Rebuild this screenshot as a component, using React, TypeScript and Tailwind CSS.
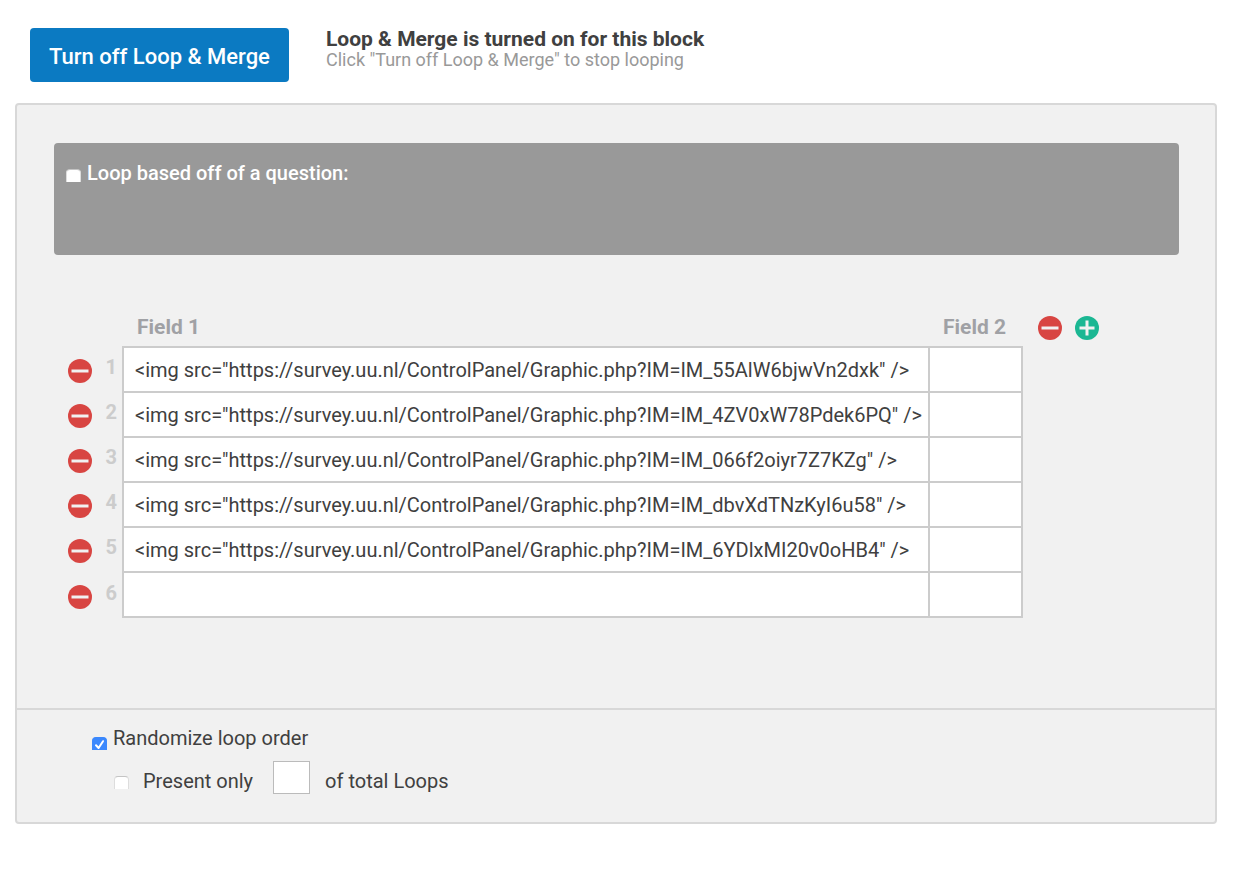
import { useState } from 'react';

interface LoopRow {
  field1: string;
  field2: string;
}

const IMAGE_URL = 'https://survey.uu.nl/ControlPanel/Graphic.php?IM=';

const imageTag = (id: string) => `<img src="${IMAGE_URL}${id}" />`;

const INITIAL_ROWS: LoopRow[] = [
  { field1: imageTag('IM_55AlW6bjwVn2dxk'), field2: '' },
  { field1: imageTag('IM_4ZV0xW78Pdek6PQ'), field2: '' },
  { field1: imageTag('IM_066f2oiyr7Z7KZg'), field2: '' },
  { field1: imageTag('IM_dbvXdTNzKyI6u58'), field2: '' },
  { field1: imageTag('IM_6YDlxMI20v0oHB4'), field2: '' },
  { field1: '', field2: '' },
];

export default function App() {
  const [rows, setRows] = useState(INITIAL_ROWS);
  const [fromQuestion, setFromQuestion] = useState(false);
  const [randomize, setRandomize] = useState(true);
  const [presentOnly, setPresentOnly] = useState(false);
  const [total, setTotal] = useState('');

  const update = (index: number, key: keyof LoopRow, value: string) =>
    setRows(rows.map((row, i) => (i === index ? { ...row, [key]: value } : row)));

  const remove = (index: number) => setRows(rows.filter((_, i) => i !== index));

  return (
    <div className="min-h-screen bg-white pt-7 pr-[23px] pb-11 pl-[15px] font-['Roboto',sans-serif] text-[20px] leading-6 text-[#404040]">
      <header className="mb-[21px] flex items-start pl-[15px]">
        <button
          type="button"
          className="h-[54px] w-[259px] rounded bg-[#0b7ac2] pt-1 text-[22px] font-medium text-white"
        >
          Turn off Loop &amp; Merge
        </button>
        <div className="ml-[37px]">
          <h1 className="text-[21px] leading-[22px] font-bold">
            Loop &amp; Merge is turned on for this block
          </h1>
          <p className="text-[18px] leading-5 text-[#999999]">
            Click "Turn off Loop &amp; Merge" to stop looping
          </p>
        </div>
      </header>

      <main className="rounded border-2 border-[#d8d8d8] bg-[#f1f1f1]">
        <section className="pt-[38px] pr-9 pb-[90px] pl-[37px]">
          <div className="h-28 rounded bg-[#999999] pt-[18px] pl-3">
            <label className="flex w-fit items-center gap-1.5 font-medium text-white">
              <Checkbox checked={fromQuestion} onChange={setFromQuestion} />
              Loop based off of a question:
            </label>
          </div>

          <table className="mt-[55px] w-full table-fixed border-separate border-spacing-0">
            <colgroup>
              <col className="w-[50px]" />
              <col className="w-[18px]" />
              <col className="w-[806px]" />
              <col className="w-[95px]" />
              <col />
            </colgroup>
            <thead>
              <tr className="h-9 text-left text-[21px] text-[#a0a1a5]">
                <td />
                <td />
                <th scope="col" className="pb-0.5 pl-[15px] font-bold">
                  Field 1
                </th>
                <th scope="col" className="pb-0.5 pl-[15px] font-bold">
                  Field 2
                </th>
                <td>
                  <div className="flex gap-[13px] pl-[15px]">
                    <RoundButton label="Remove field" />
                    <RoundButton label="Add field" plus />
                  </div>
                </td>
              </tr>
            </thead>
            <tbody>
              {rows.map((row, i) => (
                <tr key={i} className="group h-[45px]">
                  <td className="pt-1 pl-3.5">
                    <RoundButton label={`Remove row ${i + 1}`} onClick={() => remove(i)} />
                  </td>
                  <th scope="row" className="pr-[5px] pb-1 text-right font-bold text-[#cccccc]">
                    {i + 1}
                  </th>
                  <td className="border-t-2 border-l-2 border-[#cccccc] bg-white group-last:border-b-2">
                    <CellInput
                      label={`Field 1, row ${i + 1}`}
                      value={row.field1}
                      onChange={(value) => update(i, 'field1', value)}
                    />
                  </td>
                  <td className="border-x-2 border-t-2 border-[#cccccc] bg-white group-last:border-b-2">
                    <CellInput
                      label={`Field 2, row ${i + 1}`}
                      value={row.field2}
                      onChange={(value) => update(i, 'field2', value)}
                    />
                  </td>
                </tr>
              ))}
            </tbody>
          </table>
        </section>

        <section className="border-t-2 border-[#d8d8d8] pt-[15px] pb-7 pl-[75px]">
          <label className="flex w-fit items-center gap-1.5">
            <span className="pt-2">
              <Checkbox checked={randomize} onChange={setRandomize} />
            </span>
            Randomize loop order
          </label>
          <div className="mt-[11px] flex items-center pl-[22px]">
            <label className="flex items-center gap-3.5 pt-1.5">
              <Checkbox checked={presentOnly} onChange={setPresentOnly} />
              Present only
            </label>
            <input
              type="text"
              id="total-loops"
              value={total}
              onChange={(e) => setTotal(e.target.value)}
              className="mr-[15px] ml-5 h-[33px] w-[37px] border border-[#bbbbbb] bg-white px-1"
            />
            <label htmlFor="total-loops" className="pt-1.5">
              of total Loops
            </label>
          </div>
        </section>
      </main>
    </div>
  );
}

function Checkbox({
  checked,
  onChange,
}: {
  checked: boolean;
  onChange: (checked: boolean) => void;
}) {
  return (
    <span className="relative mt-1 flex">
      <input
        type="checkbox"
        checked={checked}
        onChange={(e) => onChange(e.target.checked)}
        className="peer h-[13px] w-[15px] appearance-none rounded-t-sm border-x border-t border-x-[#dddddd] border-t-[#c4c4c4] bg-white checked:border-[#3b88fd] checked:bg-[#3b88fd]"
      />
      <svg
        viewBox="0 0 15 13"
        className="pointer-events-none absolute inset-0 hidden peer-checked:block"
        fill="none"
        stroke="white"
        strokeWidth="2"
        strokeLinecap="round"
        strokeLinejoin="round"
      >
        <path d="M4 8.2 6.6 11 11 4.2" />
      </svg>
    </span>
  );
}

function RoundButton({
  label,
  plus = false,
  onClick,
}: {
  label: string;
  plus?: boolean;
  onClick?: () => void;
}) {
  return (
    <button type="button" aria-label={label} onClick={onClick} className="block size-6">
      <svg viewBox="0 0 24 24" className="size-full">
        <circle cx="12" cy="12" r="12" fill={plus ? '#1bb793' : '#d84542'} />
        {plus ? (
          <path d="M4.5 12h15M12 4.5v15" stroke="#f1f1f1" strokeWidth="3" />
        ) : (
          <path d="M3.5 12h17" stroke="#f1f1f1" strokeWidth="3" />
        )}
      </svg>
    </button>
  );
}

function CellInput({
  label,
  value,
  onChange,
}: {
  label: string;
  value: string;
  onChange: (value: string) => void;
}) {
  return (
    <input
      type="text"
      aria-label={label}
      value={value}
      onChange={(e) => onChange(e.target.value)}
      className="block h-[43px] w-full pt-px pl-[11px] outline-none"
    />
  );
}
